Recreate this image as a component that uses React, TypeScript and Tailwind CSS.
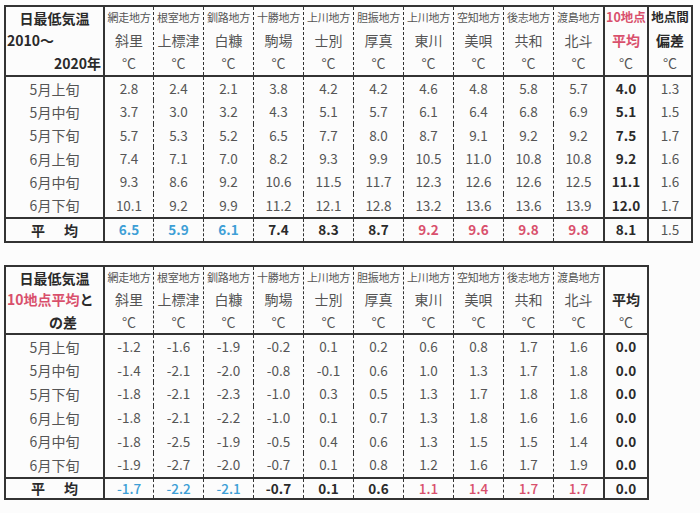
import type { ReactNode } from "react";

const regions = ["網走地方", "根室地方", "釧路地方", "十勝地方", "上川地方", "胆振地方", "上川地方", "空知地方", "後志地方", "渡島地方"];
const cities = ["斜里", "上標津", "白糠", "駒場", "士別", "厚真", "東川", "美唄", "共和", "北斗"];
const periods = ["5月上旬", "5月中旬", "5月下旬", "6月上旬", "6月中旬", "6月下旬"];

const table1 = [
  ["2.8", "2.4", "2.1", "3.8", "4.2", "4.2", "4.6", "4.8", "5.8", "5.7", "4.0", "1.3"],
  ["3.7", "3.0", "3.2", "4.3", "5.1", "5.7", "6.1", "6.4", "6.8", "6.9", "5.1", "1.5"],
  ["5.7", "5.3", "5.2", "6.5", "7.7", "8.0", "8.7", "9.1", "9.2", "9.2", "7.5", "1.7"],
  ["7.4", "7.1", "7.0", "8.2", "9.3", "9.9", "10.5", "11.0", "10.8", "10.8", "9.2", "1.6"],
  ["9.3", "8.6", "9.2", "10.6", "11.5", "11.7", "12.3", "12.6", "12.6", "12.5", "11.1", "1.6"],
  ["10.1", "9.2", "9.9", "11.2", "12.1", "12.8", "13.2", "13.6", "13.6", "13.9", "12.0", "1.7"],
];
const avg1 = ["6.5", "5.9", "6.1", "7.4", "8.3", "8.7", "9.2", "9.6", "9.8", "9.8", "8.1", "1.5"];

const table2 = [
  ["-1.2", "-1.6", "-1.9", "-0.2", "0.1", "0.2", "0.6", "0.8", "1.7", "1.6", "0.0"],
  ["-1.4", "-2.1", "-2.0", "-0.8", "-0.1", "0.6", "1.0", "1.3", "1.7", "1.8", "0.0"],
  ["-1.8", "-2.1", "-2.3", "-1.0", "0.3", "0.5", "1.3", "1.7", "1.8", "1.8", "0.0"],
  ["-1.8", "-2.1", "-2.2", "-1.0", "0.1", "0.7", "1.3", "1.8", "1.6", "1.6", "0.0"],
  ["-1.8", "-2.5", "-1.9", "-0.5", "0.4", "0.6", "1.3", "1.5", "1.5", "1.4", "0.0"],
  ["-1.9", "-2.7", "-2.0", "-0.7", "0.1", "0.8", "1.2", "1.6", "1.7", "1.9", "0.0"],
];
const avg2 = ["-1.7", "-2.2", "-2.1", "-0.7", "0.1", "0.6", "1.1", "1.4", "1.7", "1.7", "0.0"];

const PINK = "text-[#d9506c]";
const BLUE = "text-[#3e9fd6]";

// column 0 gets a solid rule, the rest dashed
const colCls = (i: number) =>
  i === 0
    ? "w-[50px] border-l-2 border-solid border-[#333]"
    : "w-[50px] border-l border-dashed border-[#333]";

const extraCls = "w-[44px] border-l-2 border-solid border-[#333]";

function Cell({ className, children }: { className: string; children?: ReactNode }) {
  return <div className={`flex items-center justify-center shrink-0 ${className}`}>{children}</div>;
}

function avgColor(i: number) {
  if (i < 3) return BLUE;
  if (i < 6) return "text-[#2a2a2a]";
  return PINK;
}

function Table1() {
  return (
    <div className="ml-[4px] mt-[5px] w-fit border-2 border-[#333]">
      {/* header */}
      <div className="flex h-[70px] border-b-2 border-[#333]">
        <div className="w-[97px] shrink-0 flex flex-col font-bold text-[14px] text-[#2a2a2a]">
          <div className="h-[22px] flex items-center justify-center">日最低気温</div>
          <div className="h-[24px] flex items-center pl-[1px]">2010～</div>
          <div className="h-[24px] flex items-center justify-end pr-[2px]">2020年</div>
        </div>
        {regions.map((r, i) => (
          <div key={i} className={`shrink-0 flex flex-col text-[#555] ${colCls(i)}`}>
            <div className="h-[22px] flex items-center justify-center text-[11px] tracking-[-0.3px] whitespace-nowrap">{r}</div>
            <div className="h-[24px] flex items-center justify-center text-[14px]">{cities[i]}</div>
            <div className="h-[24px] flex items-center justify-center text-[14px]">°C</div>
          </div>
        ))}
        <div className={`shrink-0 flex flex-col ${extraCls}`}>
          <div className={`h-[22px] flex items-center justify-center text-[12.5px] font-bold ${PINK}`}>10地点</div>
          <div className={`h-[24px] flex items-center justify-center text-[14px] font-bold ${PINK}`}>平均</div>
          <div className="h-[24px] flex items-center justify-center text-[14px] text-[#555]">°C</div>
        </div>
        <div className={`shrink-0 flex flex-col ${extraCls}`}>
          <div className="h-[22px] flex items-center justify-center text-[12.5px] font-bold text-[#2a2a2a]">地点間</div>
          <div className="h-[24px] flex items-center justify-center text-[14px] font-bold text-[#2a2a2a]">偏差</div>
          <div className="h-[24px] flex items-center justify-center text-[14px] text-[#555]">°C</div>
        </div>
      </div>
      {/* body */}
      {table1.map((row, r) => (
        <div key={r} className="flex h-[23.33px] text-[13.5px] text-[#555]">
          <Cell className="w-[97px] text-[14px]">{periods[r]}</Cell>
          {row.slice(0, 10).map((v, i) => (
            <Cell key={i} className={colCls(i)}>{v}</Cell>
          ))}
          <Cell className={`${extraCls} font-bold text-[#2a2a2a]`}>{row[10]}</Cell>
          <Cell className={extraCls}>{row[11]}</Cell>
        </div>
      ))}
      {/* average */}
      <div className="flex h-[24px] border-t-2 border-[#333] text-[13.5px] font-bold">
        <Cell className="w-[97px] text-[14px] text-[#2a2a2a] gap-[19px]">
          <span>平</span>
          <span>均</span>
        </Cell>
        {avg1.slice(0, 10).map((v, i) => (
          <Cell key={i} className={`${colCls(i)} ${avgColor(i)}`}>{v}</Cell>
        ))}
        <Cell className={`${extraCls} text-[#2a2a2a]`}>{avg1[10]}</Cell>
        <Cell className={`${extraCls} font-normal text-[#555]`}>{avg1[11]}</Cell>
      </div>
    </div>
  );
}

function Table2() {
  return (
    <div className="ml-[4px] mt-[22px] w-fit border-2 border-[#333]">
      <div className="flex h-[68px] border-b-2 border-[#333]">
        <div className="w-[97px] shrink-0 flex flex-col font-bold text-[14px] text-[#2a2a2a]">
          <div className="h-[22px] flex items-center justify-center">日最低気温</div>
          <div className="h-[23px] flex items-center pl-[1px]">
            <span className={PINK}>10地点平均</span>と
          </div>
          <div className="h-[23px] flex items-center pl-[43px]">の差</div>
        </div>
        {regions.map((r, i) => (
          <div key={i} className={`shrink-0 flex flex-col text-[#555] ${colCls(i)}`}>
            <div className="h-[22px] flex items-center justify-center text-[11px] tracking-[-0.3px] whitespace-nowrap">{r}</div>
            <div className="h-[23px] flex items-center justify-center text-[14px]">{cities[i]}</div>
            <div className="h-[23px] flex items-center justify-center text-[14px]">°C</div>
          </div>
        ))}
        <div className={`shrink-0 flex flex-col ${extraCls}`}>
          <div className="h-[22px]" />
          <div className="h-[23px] flex items-center justify-center text-[14px] font-bold text-[#2a2a2a]">平均</div>
          <div className="h-[23px] flex items-center justify-center text-[14px] text-[#555]">°C</div>
        </div>
      </div>
      {table2.map((row, r) => (
        <div key={r} className="flex h-[23.67px] text-[13.5px] text-[#555]">
          <Cell className="w-[97px] text-[14px]">{periods[r]}</Cell>
          {row.slice(0, 10).map((v, i) => (
            <Cell key={i} className={colCls(i)}>{v}</Cell>
          ))}
          <Cell className={`${extraCls} font-bold text-[#2a2a2a]`}>{row[10]}</Cell>
        </div>
      ))}
      <div className="flex h-[21px] border-t-2 border-[#333] text-[13.5px]">
        <Cell className="w-[97px] text-[14px] font-bold text-[#2a2a2a] gap-[19px]">
          <span>平</span>
          <span>均</span>
        </Cell>
        {avg2.slice(0, 10).map((v, i) => (
          <Cell
            key={i}
            className={`${colCls(i)} ${avgColor(i)} ${i >= 3 && i < 6 ? "font-bold" : "font-medium"}`}
          >
            {v}
          </Cell>
        ))}
        <Cell className={`${extraCls} font-bold text-[#2a2a2a]`}>{avg2[10]}</Cell>
      </div>
    </div>
  );
}

export default function App() {
  return (
    <div className="w-[700px] h-[513px] overflow-hidden bg-[#fcfcfc] font-['Noto_Sans_CJK_JP','Noto_Sans',sans-serif] leading-none">
      <Table1 />
      <Table2 />
    </div>
  );
}
